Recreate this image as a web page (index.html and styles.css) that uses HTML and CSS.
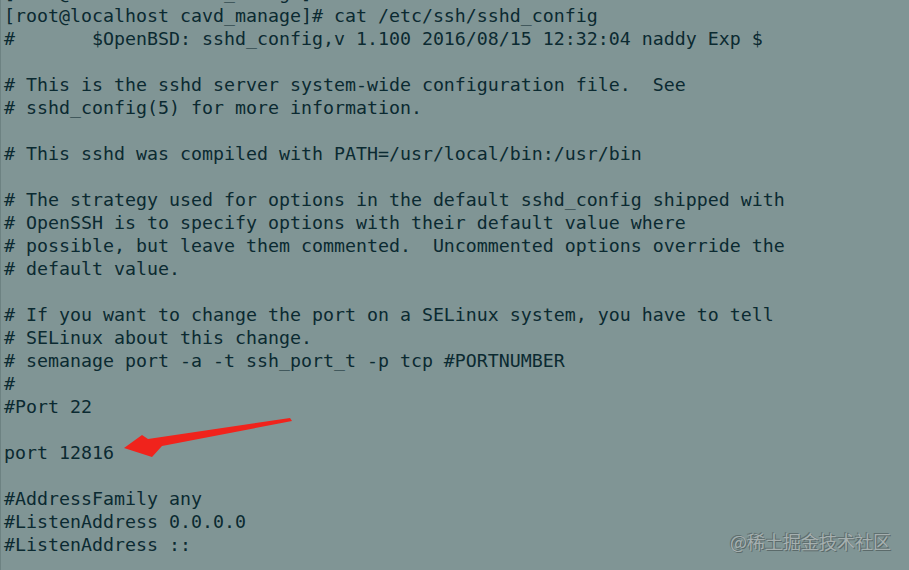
FILE: index.html
```html
<!DOCTYPE html>
<html>
<head>
<meta charset="utf-8">
<link rel="stylesheet" href="styles.css">
</head>
<body>
<div class="terminal">
<pre class="output">[root@localhost cavd_manage]#
[root@localhost cavd_manage]# cat /etc/ssh/sshd_config
#       $OpenBSD: sshd_config,v 1.100 2016/08/15 12:32:04 naddy Exp $

# This is the sshd server system-wide configuration file.  See
# sshd_config(5) for more information.

# This sshd was compiled with PATH=/usr/local/bin:/usr/bin

# The strategy used for options in the default sshd_config shipped with
# OpenSSH is to specify options with their default value where
# possible, but leave them commented.  Uncommented options override the
# default value.

# If you want to change the port on a SELinux system, you have to tell
# SELinux about this change.
# semanage port -a -t ssh_port_t -p tcp #PORTNUMBER
#
#Port 22

port 12816

#AddressFamily any
#ListenAddress 0.0.0.0
#ListenAddress ::</pre>
<svg class="arrow" width="180" height="45" viewBox="0 0 180 45">
  <polygon points="3,33 21,20 27,24 169,3 171,6 41,31 31,42" fill="#f0231c"/>
</svg>
<div class="watermark">@稀土掘金技术社区</div>
</div>
</body>
</html>
```
FILE: styles.css
```css
html, body {
  margin: 0;
  padding: 0;
  background: #809595;
  overflow: hidden;
}
.terminal {
  position: relative;
  width: 909px;
  height: 570px;
  background: #809595;
  border-left: 1px solid #6d8282;
  box-sizing: border-box;
  overflow: hidden;
}
.output {
  margin: -19px 0 0 3px;
  font-family: "DejaVu Sans Mono", monospace;
  font-size: 18.27px;
  line-height: 23px;
  color: #0b2a31;
  white-space: pre;
}
.arrow {
  position: absolute;
  left: 120px;
  top: 415px;
}
.watermark {
  position: absolute;
  left: 729px;
  top: 529px;
  font-family: "Noto Sans CJK SC", sans-serif;
  font-size: 18px;
  line-height: 24px;
  color: #a6b0b0;
  text-shadow: -1px -1px 0 #5f6f6f, 1px 1px 0 #5b6a6a;
}
```
